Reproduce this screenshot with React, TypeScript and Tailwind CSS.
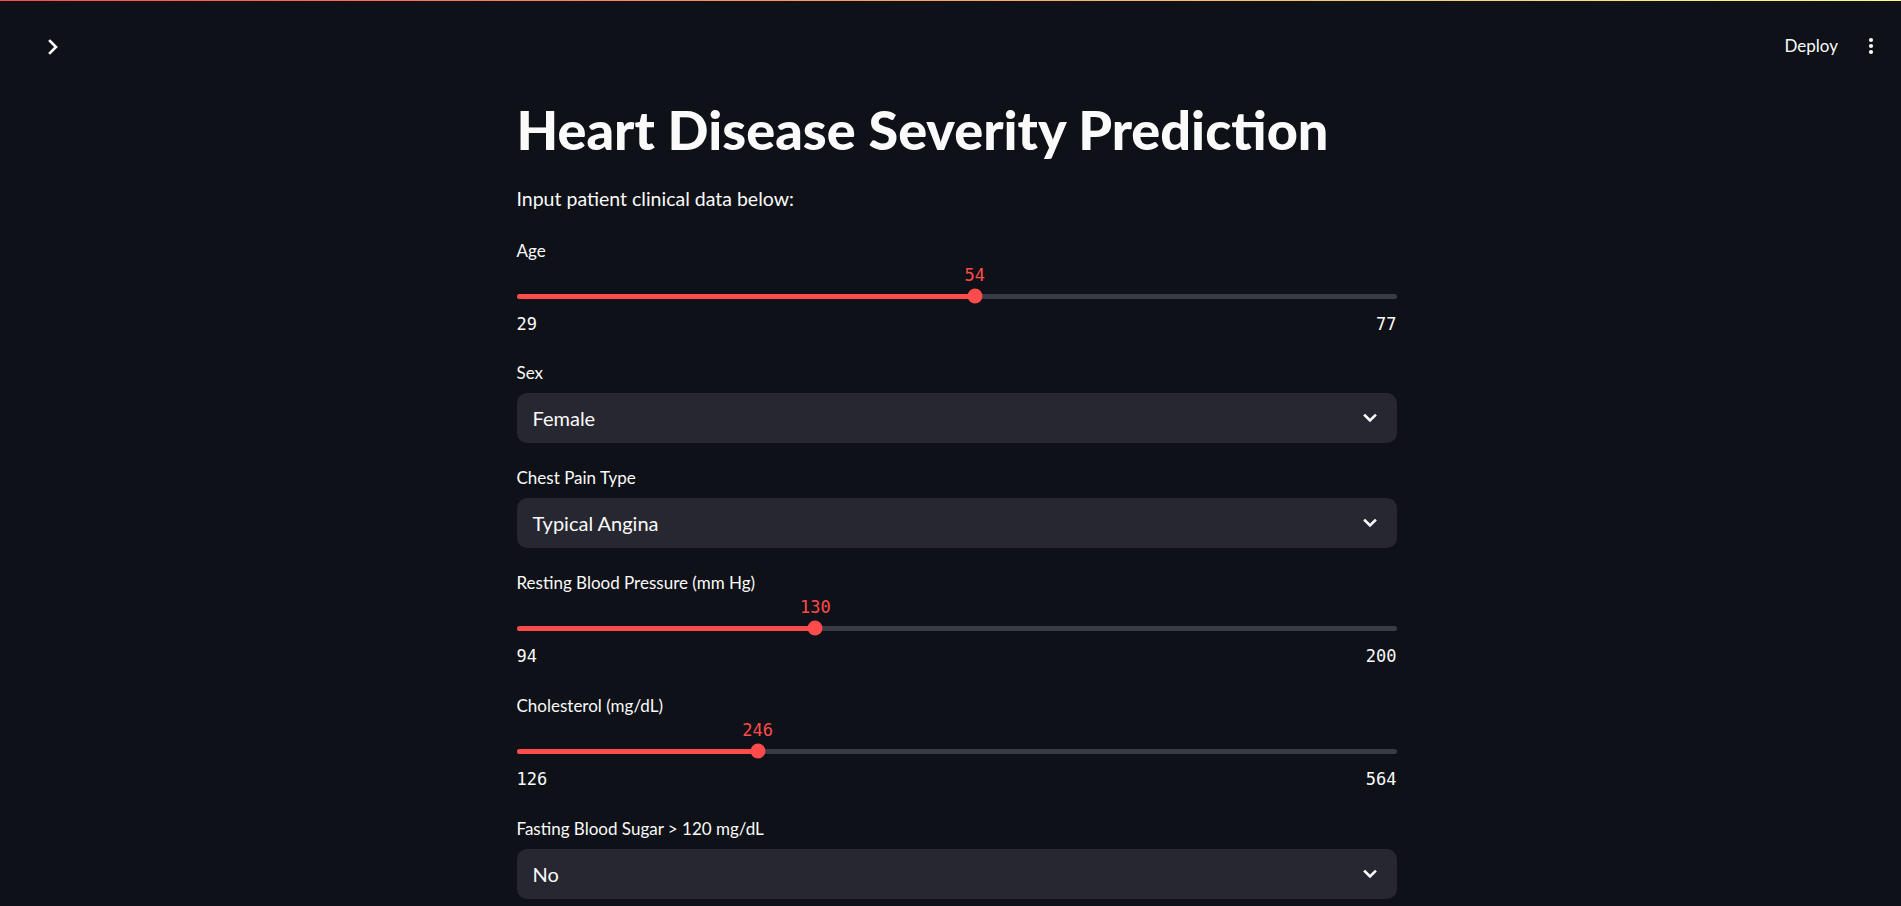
import React from "react";

const SANS = "font-['Lato','Noto_Sans',sans-serif]";

function Label({ text }: { text: string }) {
  return (
    <div className={`h-[24px] leading-[24px] text-[17px] text-[#fafafa] ${SANS}`}>{text}</div>
  );
}

function Slider({ min, max, value }: { min: number; max: number; value: number }) {
  const pct = ((value - min) / (max - min)) * 100;
  return (
    <div className="mt-[2px]">
      <div className="relative h-[20px]">
        <span
          className="absolute top-0 -translate-x-1/2 leading-[20px] text-[17px] text-[#ff4b4b] font-['DejaVu_Sans_Mono',monospace]"
          style={{ left: `${pct}%` }}
        >
          {value}
        </span>
      </div>
      <div className="mt-[3px] h-[16px] flex items-center">
        <div className="relative w-full h-[5px] rounded-full bg-[#3a3c45]">
          <div className="absolute left-0 top-0 h-full rounded-full bg-[#ff4b4b]" style={{ width: `${pct}%` }} />
          <div
            className="absolute top-1/2 w-[15px] h-[15px] -translate-x-1/2 -translate-y-1/2 rounded-full bg-[#ff4b4b]"
            style={{ left: `${pct}%` }}
          />
        </div>
      </div>
      <div className="mt-[10px] h-[20px] flex justify-between leading-[20px] text-[17px] text-[#fafafa] font-['DejaVu_Sans_Mono',monospace]">
        <span>{min}</span>
        <span>{max}</span>
      </div>
    </div>
  );
}

function Select({ value }: { value: string }) {
  return (
    <div className="mt-[8px] h-[50px] rounded-[10px] bg-[#262730] flex items-center justify-between pl-[16px] pr-[20px]">
      <span className={`text-[20px] text-[#fafafa] ${SANS}`}>{value}</span>
      <svg width="14" height="10" viewBox="0 0 14 10" fill="none">
        <polyline points="2,2.5 7,7.5 12,2.5" stroke="#fafafa" strokeWidth="2.6" strokeLinecap="square" />
      </svg>
    </div>
  );
}

export default function App() {
  return (
    <div className="min-h-[906px] bg-[#0e1117] text-[#fafafa] overflow-hidden">
      <div className="h-px bg-[linear-gradient(90deg,#ff4b4b,#fffd80)]" />
      <div className="h-[90px] flex items-center justify-between pl-[46px] pr-[27px]">
        <svg width="14" height="16" viewBox="0 0 14 16" fill="none" className="mt-[2px]">
          <polyline points="4,2 10,8 4,14" stroke="#fafafa" strokeWidth="2.6" strokeLinecap="square" />
        </svg>
        <div className="flex items-center gap-[30px]">
          <span className={`text-[17px] text-[#fafafa] ${SANS}`}>Deploy</span>
          <svg width="6" height="18" viewBox="0 0 6 18">
            <circle cx="3" cy="3" r="2.1" fill="#fafafa" />
            <circle cx="3" cy="9" r="2.1" fill="#fafafa" />
            <circle cx="3" cy="15" r="2.1" fill="#fafafa" />
          </svg>
        </div>
      </div>
      <div className="flex justify-center pl-[12px]">
        <div className="w-[880px]">
          <h1 className={`mt-[9px] h-[60px] leading-[60px] text-[54px] font-black text-[#fafafa] ${SANS}`}>
            Heart Disease Severity Prediction
          </h1>
          <p className={`mt-[24px] h-[30px] leading-[30px] text-[19.5px] text-[#fafafa] ${SANS}`}>
            Input patient clinical data below:
          </p>
          <div className="mt-[25px]">
            <Label text="Age" />
            <Slider min={29} max={77} value={54} />
          </div>
          <div className="mt-[27px]">
            <Label text="Sex" />
            <Select value="Female" />
          </div>
          <div className="mt-[23px]">
            <Label text="Chest Pain Type" />
            <Select value="Typical Angina" />
          </div>
          <div className="mt-[23px]">
            <Label text="Resting Blood Pressure (mm Hg)" />
            <Slider min={94} max={200} value={130} />
          </div>
          <div className="mt-[28px]">
            <Label text="Cholesterol (mg/dL)" />
            <Slider min={126} max={564} value={246} />
          </div>
          <div className="mt-[28px]">
            <Label text="Fasting Blood Sugar > 120 mg/dL" />
            <Select value="No" />
          </div>
          <div className="h-[40px]" />
        </div>
      </div>
    </div>
  );
}
